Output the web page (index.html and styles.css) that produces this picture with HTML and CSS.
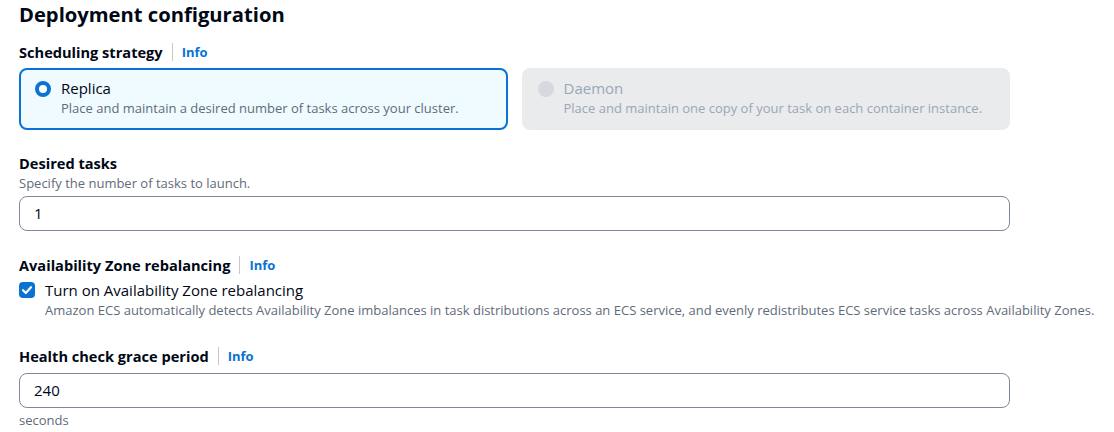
FILE: index.html
```html
<!DOCTYPE html>
<html lang="en">
<head>
<meta charset="utf-8">
<title>Deployment configuration</title>
<link rel="stylesheet" href="styles.css">
</head>
<body>
<div class="page">
  <h2 class="title">Deployment configuration</h2>

  <div class="field first">
    <div class="label-row"><span class="label">Scheduling strategy</span><span class="sep"></span><a class="info">Info</a></div>
    <div class="tiles">
      <div class="tile selected">
        <span class="radio on"></span>
        <div class="tile-text">
          <div class="tile-title">Replica</div>
          <div class="tile-desc">Place and maintain a desired number of tasks across your cluster.</div>
        </div>
      </div>
      <div class="tile disabled">
        <span class="radio off"></span>
        <div class="tile-text">
          <div class="tile-title">Daemon</div>
          <div class="tile-desc">Place and maintain one copy of your task on each container instance.</div>
        </div>
      </div>
    </div>
  </div>

  <div class="field">
    <div class="label-row"><span class="label">Desired tasks</span></div>
    <div class="desc">Specify the number of tasks to launch.</div>
    <div class="input">1</div>
  </div>

  <div class="field az">
    <div class="label-row"><span class="label">Availability Zone rebalancing</span><span class="sep"></span><a class="info">Info</a></div>
    <div class="check-row">
      <span class="checkbox"><svg width="16" height="16" viewBox="0 0 16 16"><path d="M4 8.2 L6.8 11 L12 5.2" fill="none" stroke="#fff" stroke-width="2.2" stroke-linecap="round" stroke-linejoin="round"/></svg></span>
      <div>
        <div class="check-label">Turn on Availability Zone rebalancing</div>
        <div class="check-desc">Amazon ECS automatically detects Availability Zone imbalances in task distributions across an ECS service, and evenly redistributes ECS service tasks across Availability Zones.</div>
      </div>
    </div>
  </div>

  <div class="field last">
    <div class="label-row"><span class="label">Health check grace period</span><span class="sep"></span><a class="info">Info</a></div>
    <div class="input direct">240</div>
    <div class="constraint">seconds</div>
  </div>
</div>
</body>
</html>
```
FILE: styles.css
```css
* { box-sizing: border-box; }
body {
  margin: 0;
  font-family: "Open Sans", "Noto Sans", sans-serif;
  color: #000716;
  background: #fff;
}
.page {
  padding: 0 0 0 19px;
  width: 1114px;
}
.title {
  margin: 0;
  font-size: 20.2px;
  font-weight: 700;
  line-height: 28px;
}
.field { margin-top: 23px; }
.field.first { margin-top: 14px; }
.field.az { margin-top: 24px; }
.field.last { margin-top: 26px; }
.label-row {
  display: flex;
  align-items: center;
  height: 20px;
}
.label { font-size: 14.6px; font-weight: 700; }
.sep {
  width: 1px;
  height: 18px;
  background: #c6c6cd;
  margin: 0 9px 0 9px;
}
.info { color: #0972d3; font-weight: 700; font-size: 13px; }
.tiles {
  display: flex;
  gap: 14px;
  margin-top: 6px;
  width: 991px;
}
.tile {
  flex: 1;
  display: flex;
  gap: 10px;
  height: 62px;
  border-radius: 8px;
  padding: 8px 14px;
}
.tile.selected {
  border: 2px solid #0972d3;
  background: #f0fbff;
}
.tile.disabled {
  background: #e9ebed;
  border: 2px solid #e9ebed;
  color: #9ba7b6;
}
.radio {
  width: 16px; height: 16px; border-radius: 50%;
  flex: none;
  margin-top: 3px;
}
.radio.on { border: 4px solid #0972d3; background: #fff; }
.radio.off { background: #d5d8dd; }
.tile-title { font-size: 15px; line-height: 20px; }
.tile-desc { font-size: 13px; line-height: 20px; color: #5f6b7a; }
.disabled .tile-desc { color: #9ba7b6; }
.desc { font-size: 13px; line-height: 20px; color: #5f6b7a; }
.input {
  width: 991px;
  height: 35px;
  border: 1px solid #7d8998;
  border-radius: 8px;
  padding: 6px 14px;
  font-size: 15px;
  line-height: 21px;
  margin-top: 3px;
}
.input.direct { margin-top: 7px; }
.check-row { display: flex; gap: 10px; margin-top: 5px; }
.checkbox {
  width: 16px; height: 16px; border-radius: 4px;
  background: #0972d3; flex: none; margin-top: 2px;
  display: flex;
}
.check-label { font-size: 15px; line-height: 20px; }
.check-desc { font-size: 13px; line-height: 20px; color: #5f6b7a; white-space: nowrap; }
.constraint { font-size: 13px; line-height: 18px; color: #5f6b7a; margin-top: 3px; }
```
